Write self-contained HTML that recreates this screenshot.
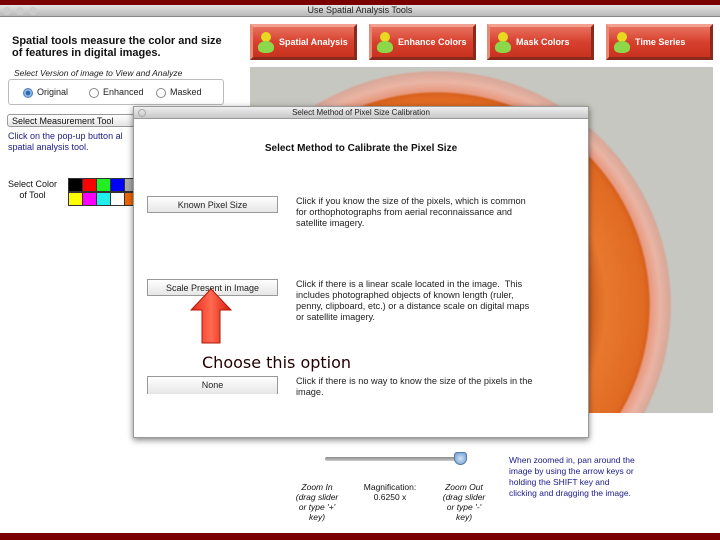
<!DOCTYPE html>
<html><head><meta charset="utf-8"><style>
*{margin:0;padding:0;box-sizing:border-box}
body{width:720px;height:540px;overflow:hidden;background:#fff;font-family:"Liberation Sans",sans-serif;position:relative}
.a{position:absolute}
.btn{position:absolute;top:24px;width:107px;height:36px;background:linear-gradient(#e8705e,#d8402e 50%,#c8321f);border:3px solid #b44a3a;border-top-color:#f4a090;border-left-color:#e88a78;border-bottom-color:#8a2a1c;border-right-color:#8a2a1c;color:#fff;font-size:9px;font-weight:bold;line-height:30px;padding-left:26px}
.btn i{position:absolute;left:8px;top:5px;width:10px;height:10px;border-radius:50%;background:#e8d820}
.btn b{position:absolute;left:5px;top:14px;width:16px;height:12px;border-radius:50% 50% 40% 40%;background:#8cd84a}
.pb{position:absolute;left:147px;width:131px;height:17px;border:1px solid #999;background:linear-gradient(#fff,#e6e6e6);font-size:9px;text-align:center;line-height:16px;color:#222}
.dt{position:absolute;left:296px;font-size:9.2px;line-height:11px;color:#222;white-space:nowrap}
.c{position:absolute;width:15px;height:14px;border:1px solid #333}
</style></head><body>
<div class="a" style="left:0;top:0;width:720px;height:5px;background:#7a0000"></div>
<div class="a" style="left:0;top:5px;width:720px;height:12px;background:linear-gradient(#e4e4e4,#b8b8b8);border-bottom:1px solid #888;font-size:9px;line-height:11px;text-align:center;color:#222">Use Spatial Analysis Tools</div>
<div class="a" style="left:3px;top:7px;width:8px;height:8px;border-radius:50%;background:#ccc"></div>
<div class="a" style="left:16px;top:7px;width:8px;height:8px;border-radius:50%;background:#ccc"></div>
<div class="a" style="left:29px;top:7px;width:8px;height:8px;border-radius:50%;background:#ccc"></div>
<div class="a" style="left:12px;top:35px;font-size:11px;font-weight:bold;line-height:12px;color:#111">Spatial tools measure the color and size<br>of features in digital images.</div>
<div class="a" style="left:14px;top:68px;font-size:8.5px;font-style:italic;color:#222">Select Version of image to View and Analyze</div>
<div class="a" style="left:8px;top:79px;width:216px;height:26px;border:1px solid #bbb;border-radius:3px"></div>
<div class="a" style="left:23px;top:88px;width:10px;height:10px;border-radius:50%;background:radial-gradient(#2a6ab0 35%,#8ab8e8 45%);border:1px solid #5580b0"></div>
<div class="a" style="left:37px;top:87px;font-size:9px;color:#222">Original</div>
<div class="a" style="left:89px;top:88px;width:10px;height:10px;border-radius:50%;border:1px solid #888"></div>
<div class="a" style="left:103px;top:87px;font-size:9px;color:#222">Enhanced</div>
<div class="a" style="left:156px;top:88px;width:10px;height:10px;border-radius:50%;border:1px solid #888"></div>
<div class="a" style="left:170px;top:87px;font-size:9px;color:#222">Masked</div>
<div class="a" style="left:7px;top:114px;width:130px;height:13px;border:1px solid #999;border-radius:3px;background:linear-gradient(#fff,#e4e4e4);font-size:9px;line-height:12px;padding-left:4px;color:#111">Select Measurement Tool</div>
<div class="a" style="left:8px;top:131px;font-size:9px;line-height:11px;color:#1a1a8a">Click on the pop-up button al<br>spatial analysis tool.</div>
<div class="a" style="left:8px;top:179px;font-size:9px;line-height:11px;color:#111;text-align:center">Select Color<br>of Tool</div>
<div class="c" style="left:68px;top:178px;background:#000"></div>
<div class="c" style="left:82px;top:178px;background:#f00"></div>
<div class="c" style="left:96px;top:178px;background:#2e2"></div>
<div class="c" style="left:110px;top:178px;background:#00f"></div>
<div class="c" style="left:124px;top:178px;background:#aaa"></div>
<div class="c" style="left:68px;top:192px;background:#ff0"></div>
<div class="c" style="left:82px;top:192px;background:#f0f"></div>
<div class="c" style="left:96px;top:192px;background:#2ee"></div>
<div class="c" style="left:110px;top:192px;background:#fff"></div>
<div class="c" style="left:124px;top:192px;background:#e60"></div>
<div class="btn" style="left:250px"><i></i><b></b>Spatial Analysis</div>
<div class="btn" style="left:369px"><i></i><b></b>Enhance Colors</div>
<div class="btn" style="left:487px"><i></i><b></b>Mask Colors</div>
<div class="btn" style="left:606px"><i></i><b></b>Time Series</div>
<div class="a" style="left:250px;top:67px;width:463px;height:346px;overflow:hidden;background:#c6c7c0">
<div class="a" style="left:-48px;top:3px;width:470px;height:470px;border-radius:50%;background:radial-gradient(circle closest-side,#d86a2a 0 55%,#c85a1a 62%,#e8782e 72%,#e06a22 88%,#d8621c 90%,#e89a80 91%,#eab4a4 95%,#d8a898 99%,#c6c7c0 100%)"></div>
</div>
<div class="a" style="left:133px;top:106px;width:456px;height:332px;background:#fff;border:1px solid #999;box-shadow:0 2px 6px rgba(0,0,0,.5)">
<div style="height:12px;background:linear-gradient(#eee,#c8c8c8);border-bottom:1px solid #999;font-size:8px;line-height:12px;text-align:center;color:#222">Select Method of Pixel Size Calibration</div>
<div class="a" style="left:4px;top:2px;width:8px;height:8px;border-radius:50%;border:1px solid #aaa"></div>
</div>
<div class="a" style="left:133px;top:143px;width:456px;text-align:center;font-size:10px;font-weight:bold;color:#111">Select Method to Calibrate the Pixel Size</div>
<div class="pb" style="top:196px">Known Pixel Size</div>
<div class="dt" style="top:196px">Click if you know the size of the pixels, which is common<br>for orthophotographs from aerial reconnaissance and<br>satellite imagery.</div>
<div class="pb" style="top:279px">Scale Present in Image</div>
<div class="dt" style="top:279px">Click if there is a linear scale located in the image.&nbsp; This<br>includes photographed objects of known length (ruler,<br>penny, clipboard, etc.) or a distance scale on digital maps<br>or satellite imagery.</div>
<div class="pb" style="top:376px;height:18px;border-bottom:none">None</div>
<div class="dt" style="top:376px">Click if there is no way to know the size of the pixels in the<br>image.</div>
<svg class="a" style="left:190px;top:288px" width="42" height="56"><defs><linearGradient id="g" x1="0" x2="1"><stop offset="0" stop-color="#e82a1a"/><stop offset=".5" stop-color="#ff6a50"/><stop offset="1" stop-color="#d81a0a"/></linearGradient></defs><path d="M21 1 L41 22 L30 22 L30 55 L12 55 L12 22 L1 22 Z" fill="url(#g)" stroke="#b01808"/></svg>
<div class="a" style="left:202px;top:353px;font-family:'DejaVu Sans',sans-serif;font-size:16px;color:#200">Choose this option</div>
<div class="a" style="left:325px;top:457px;width:135px;height:4px;border-radius:2px;background:linear-gradient(#888,#ccc)"></div>
<div class="a" style="left:454px;top:452px;width:13px;height:13px;background:radial-gradient(#cfe4f8,#6a9ad0);border:1px solid #5a7aa0;border-radius:3px 3px 50% 50%"></div>
<div class="a" style="left:292px;top:482px;width:50px;text-align:center;font-size:8.5px;font-style:italic;line-height:10px;color:#111">Zoom In<br>(drag slider<br>or type '+'<br>key)</div>
<div class="a" style="left:355px;top:482px;width:70px;text-align:center;font-size:8.5px;line-height:10px;color:#111">Magnification:<br>0.6250 x</div>
<div class="a" style="left:438px;top:482px;width:52px;text-align:center;font-size:8.5px;font-style:italic;line-height:10px;color:#111">Zoom Out<br>(drag slider<br>or type '-'<br>key)</div>
<div class="a" style="left:509px;top:455px;font-size:8.5px;line-height:11px;color:#1a1a8a">When zoomed in, pan around the<br>image by using the arrow keys or<br>holding the SHIFT key and<br>clicking and dragging the image.</div>
<div class="a" style="left:0;top:533px;width:720px;height:7px;background:#7a0000"></div>
</body></html>
